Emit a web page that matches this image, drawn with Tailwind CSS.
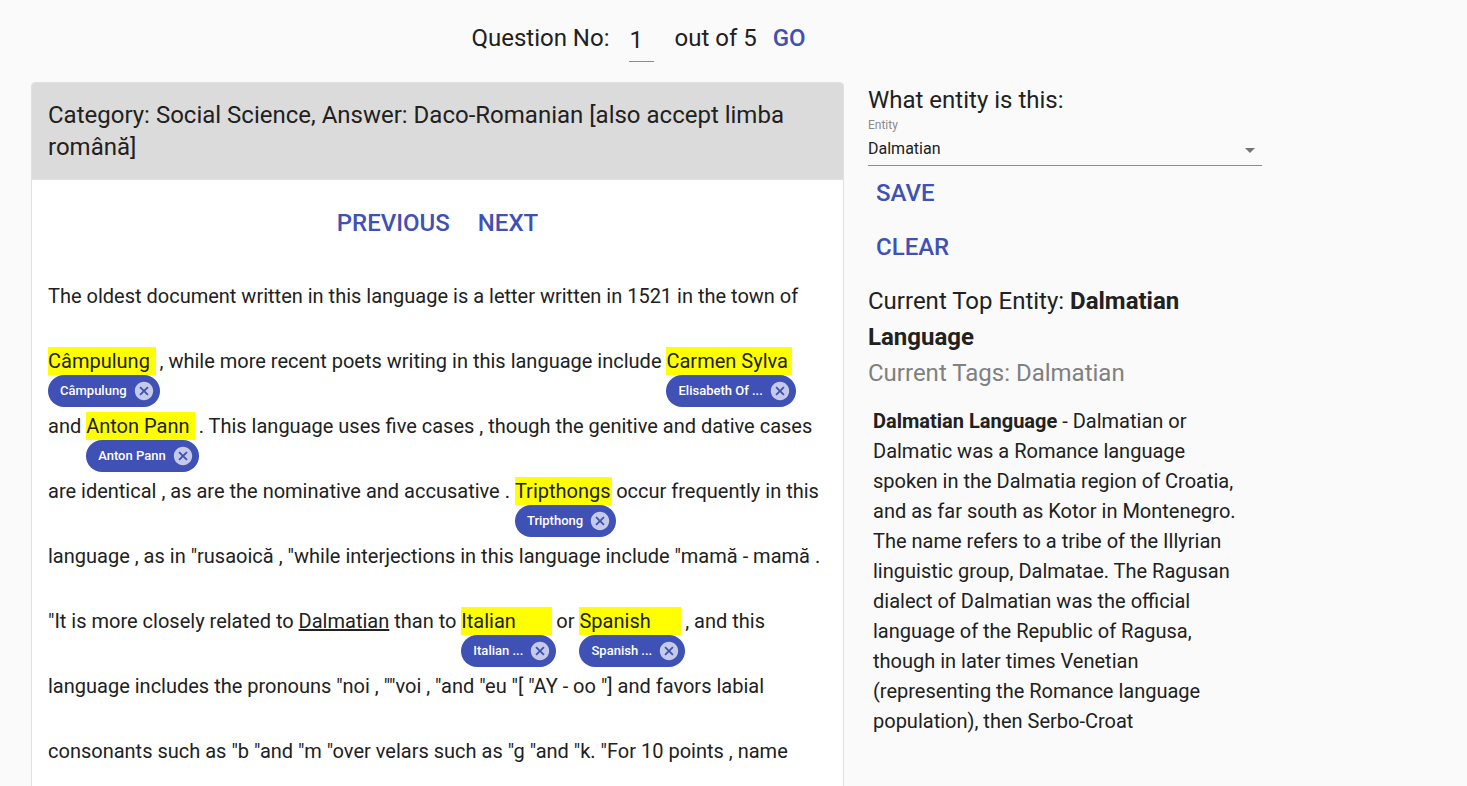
<!DOCTYPE html>
<html lang="en">
<head>
<meta charset="utf-8">
<meta name="viewport" content="width=device-width, initial-scale=1">
<title>Question Entity Tagging</title>
<script src="https://cdn.jsdelivr.net/npm/@tailwindcss/browser@4"></script>
</head>
<body class="h-screen overflow-hidden bg-[#fafafa] font-[Roboto,sans-serif] text-[#212121]">
<svg class="hidden" aria-hidden="true">
  <symbol id="cancel" viewBox="0 0 24 24"><path fill="currentColor" d="M12 2C6.47 2 2 6.47 2 12s4.47 10 10 10 10-4.47 10-10S17.53 2 12 2zm5 13.59L15.59 17 12 13.41 8.41 17 7 15.59 10.59 12 7 8.41 8.41 7 12 10.59 15.59 7 17 8.41 13.41 12 17 15.59z"/></symbol>
</svg>
<div class="max-w-[1262px] pl-[31px]">
  <form class="flex h-[82px] items-start justify-center pt-5 pr-4 text-2xl leading-9" onsubmit="return false">
    <label for="question">Question No:</label>
    <input id="question" type="text" value="1" class="ml-5 mr-5 h-[42px] w-[25px] border-b border-[#8c8c8c] bg-transparent pb-[1px] outline-none">
    <span>out of 5</span>
    <button class="ml-4 h-[34px] font-medium text-[#3f51b5]">GO</button>
  </form>
  <div class="grid grid-cols-[813fr_394fr] items-start gap-6">
    <main class="rounded border border-[#e0e0e0] bg-white pb-6">
      <h1 class="rounded-t-[3px] border-b border-[#e0e0e0] bg-[#dbdbdb] px-4 pt-4 pb-4 text-2xl leading-8">Category: Social Science, Answer: Daco-Romanian [also accept limba română]</h1>
      <div class="flex justify-center gap-7 pt-6 pb-[22px] text-2xl leading-[38px] font-medium text-[#3f51b5]">
        <button>PREVIOUS</button>
        <button>NEXT</button>
      </div>
      <p class="px-4 text-xl leading-[65px]">The oldest document written in this language is a letter written in 1521 in the town of
        <span class="inline-flex flex-col items-start leading-7"><mark class="mr-1 self-stretch bg-[#ffff00] text-[#212121]">Câmpulung</mark><span class="-mb-8 flex h-8 items-center rounded-full bg-[#3f51b5] pl-3 text-[13px] font-medium text-white">Câmpulung<button aria-label="Remove Câmpulung" class="mr-[5px] ml-[6px] text-[#c5cae9]"><svg class="size-[22px]"><use href="#cancel"/></svg></button></span></span>, while more recent poets writing in this language include
        <span class="inline-flex flex-col items-start leading-7"><mark class="mr-1 self-stretch bg-[#ffff00] text-[#212121]">Carmen Sylva</mark><span class="-mb-8 flex h-8 items-center rounded-full bg-[#3f51b5] pl-3 text-[13px] font-medium text-white">Elisabeth Of ...<button aria-label="Remove Elisabeth Of" class="mr-[5px] ml-[6px] text-[#c5cae9]"><svg class="size-[22px]"><use href="#cancel"/></svg></button></span></span>
        and
        <span class="inline-flex flex-col items-start leading-7"><mark class="mr-1 self-stretch bg-[#ffff00] text-[#212121]">Anton Pann</mark><span class="-mb-8 flex h-8 items-center rounded-full bg-[#3f51b5] pl-3 text-[13px] font-medium text-white">Anton Pann<button aria-label="Remove Anton Pann" class="mr-[5px] ml-[6px] text-[#c5cae9]"><svg class="size-[22px]"><use href="#cancel"/></svg></button></span></span>. This language uses five cases , though the genitive and dative cases are identical , as are the nominative and accusative .
        <span class="inline-flex flex-col items-start leading-7"><mark class="mr-1 self-stretch bg-[#ffff00] text-[#212121]">Tripthongs</mark><span class="-mb-8 flex h-8 items-center rounded-full bg-[#3f51b5] pl-3 text-[13px] font-medium text-white">Tripthong<button aria-label="Remove Tripthong" class="mr-[5px] ml-[6px] text-[#c5cae9]"><svg class="size-[22px]"><use href="#cancel"/></svg></button></span></span>occur frequently in this language , as in "rusaoică , "while interjections in this language include "mamă - mamă . "It is more closely related to <u class="underline decoration-2">Dalmatian</u> than to
        <span class="inline-flex flex-col items-start leading-7"><mark class="mr-1 self-stretch bg-[#ffff00] text-[#212121]">Italian</mark><span class="-mb-8 flex h-8 items-center rounded-full bg-[#3f51b5] pl-3 text-[13px] font-medium text-white">Italian ...<button aria-label="Remove Italian" class="mr-[5px] ml-[6px] text-[#c5cae9]"><svg class="size-[22px]"><use href="#cancel"/></svg></button></span></span>or
        <span class="inline-flex flex-col items-start leading-7"><mark class="mr-1 self-stretch bg-[#ffff00] text-[#212121]">Spanish</mark><span class="-mb-8 flex h-8 items-center rounded-full bg-[#3f51b5] pl-3 text-[13px] font-medium text-white">Spanish ...<button aria-label="Remove Spanish" class="mr-[5px] ml-[6px] text-[#c5cae9]"><svg class="size-[22px]"><use href="#cancel"/></svg></button></span></span>, and this language includes the pronouns "noi , ""voi , "and "eu "[ "AY - oo "] and favors labial consonants such as "b "and "m "over velars such as "g "and "k. "For 10 points , name</p>
    </main>
    <aside class="text-2xl leading-9">
      <h2>What entity is this:</h2>
      <label for="entity" class="block text-xs leading-[14px] text-[#8a8a8a]">Entity</label>
      <div class="relative border-b border-[#8c8c8c]">
        <select id="entity" class="block h-[33px] w-full appearance-none bg-transparent text-base outline-none"><option>Dalmatian</option></select>
        <svg class="pointer-events-none absolute top-[6px] right-0 size-6 text-[#757575]" viewBox="0 0 24 24" aria-hidden="true"><path fill="currentColor" d="M7 10l5 5 5-5z"/></svg>
      </div>
      <button class="block h-[54px] px-2 font-medium text-[#3f51b5]">SAVE</button>
      <button class="block h-[54px] px-2 font-medium text-[#3f51b5]">CLEAR</button>
      <p class="pt-[9px]">Current Top Entity: <strong class="font-bold">Dalmatian Language</strong></p>
      <p class="text-[#808080]">Current Tags: Dalmatian</p>
      <p class="pt-[15px] pr-4 pl-[5px] text-xl leading-[30px]"><strong class="font-bold">Dalmatian Language</strong> - Dalmatian or Dalmatic was a Romance language spoken in the Dalmatia region of Croatia, and as far south as Kotor in Montenegro. The name refers to a tribe of the Illyrian linguistic group, Dalmatae. The Ragusan dialect of Dalmatian was the official language of the Republic of Ragusa, though in later times Venetian (representing the Romance language population), then Serbo-Croat</p>
    </aside>
  </div>
</div>
</body>
</html>
